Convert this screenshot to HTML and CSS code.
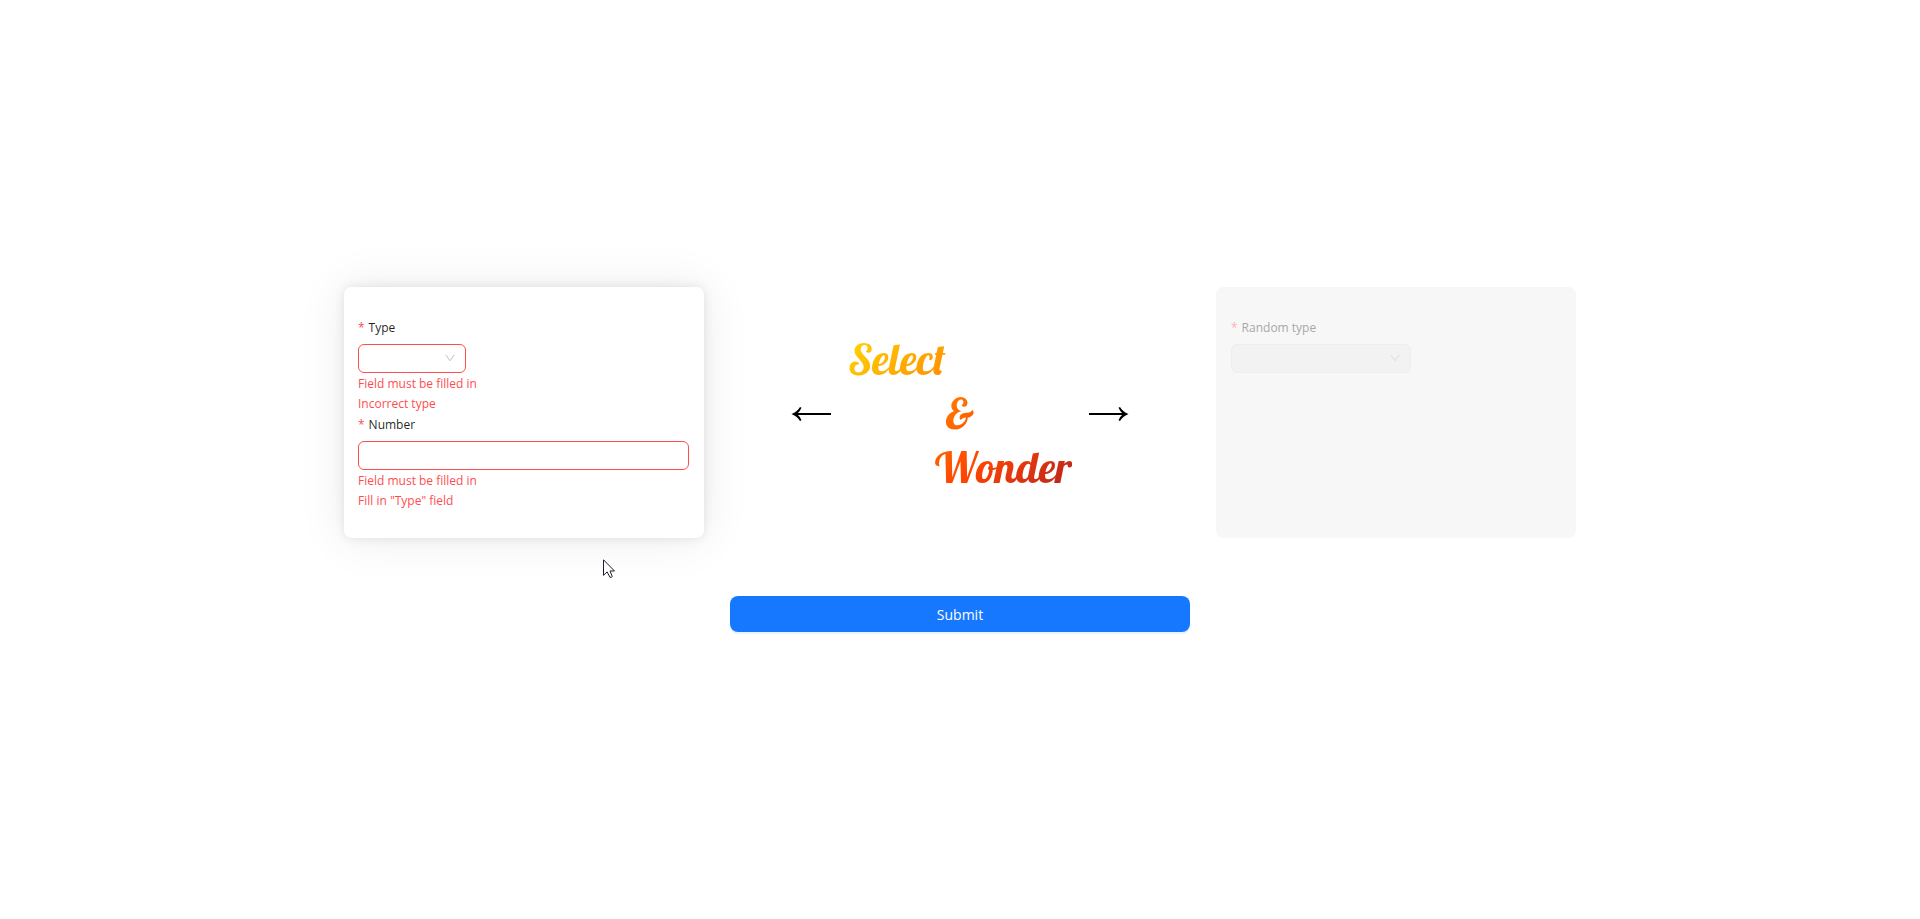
FILE: index.html
```html
<!DOCTYPE html>
<html lang="en">
<head>
<meta charset="utf-8">
<meta name="viewport" content="width=device-width, initial-scale=1">
<title>Select &amp; Wonder</title>
<link rel="stylesheet" href="styles.css">
</head>
<body>
<form class="page">
  <div class="board">
    <section class="card card-active">
      <div class="field">
        <label class="label" for="type"><span class="star">*</span>Type</label>
        <div class="select-wrap select-short">
          <select class="control invalid" id="type"><option></option></select>
          <svg class="chevron" viewBox="0 0 10 8" aria-hidden="true"><path d="M0.8 0.8 L5 6.8 L9.2 0.8"/></svg>
        </div>
        <p class="error">Field must be filled in</p>
        <p class="error">Incorrect type</p>
      </div>
      <div class="field">
        <label class="label" for="number"><span class="star">*</span>Number</label>
        <input class="control invalid" id="number" type="text">
        <p class="error">Field must be filled in</p>
        <p class="error">Fill in "Type" field</p>
      </div>
      <svg class="pointer" viewBox="0 0 12 19" aria-hidden="true"><path d="M0.5 0.8 V16.3 L4.1 12.9 L6.9 18.2 Q8.2 18.9 9.3 17.6 L7 12 H11.5 Z"/></svg>
    </section>
    <div class="hero">
      <svg class="arrow" viewBox="0 0 41 16" aria-hidden="true"><path class="shaft" d="M3 9 H40"/><path d="M0.500 9 Q6.500 6.500 9 2 L10.500 2.800 Q9 6.500 6 9 Q9 11.500 10.500 15.200 L9 16 Q6.500 11.500 0.500 9 Z"/></svg>
      <h1 class="title">
        <span class="word">Select</span>
        <span class="word word-middle">&amp;</span>
        <span class="word word-end">Wonder</span>
      </h1>
      <svg class="arrow" viewBox="0 0 41 16" aria-hidden="true"><path class="shaft" d="M1 9 H38"/><path d="M40.500 9 Q34.500 6.500 32 2 L30.500 2.800 Q32 6.500 35 9 Q32 11.500 30.500 15.200 L32 16 Q34.500 11.500 40.500 9 Z"/></svg>
    </div>
    <section class="card card-disabled">
      <div class="field">
        <label class="label" for="random"><span class="star">*</span>Random type</label>
        <div class="select-wrap select-long">
          <select class="control" id="random" disabled><option></option></select>
          <svg class="chevron" viewBox="0 0 10 8" aria-hidden="true"><path d="M0.8 0.8 L5 6.8 L9.2 0.8"/></svg>
        </div>
      </div>
    </section>
  </div>
  <button class="submit" type="button">Submit</button>
</form>
</body>
</html>
```
FILE: styles.css
```css
* {
  box-sizing: border-box;
}

body {
  margin: 0;
  background: #fff;
  color: rgba(0, 0, 0, 0.88);
  font-family: "Open Sans", "Noto Sans", sans-serif;
  font-size: 12px;
  line-height: 20px;
}

.page {
  display: flex;
  flex-direction: column;
  align-items: center;
  justify-content: center;
  gap: 58px;
  min-height: 100vh;
}

.board {
  display: grid;
  grid-template-columns: 360px 512px 360px;
}

.card {
  position: relative;
  padding: 30px 15px 27px 14px;
  border-radius: 8px;
}

.card-active {
  background: #fff;
  box-shadow: 0 0 12px rgba(0, 0, 0, 0.1), 0 0 50px rgba(0, 0, 0, 0.08);
}

.card-disabled {
  background: #f7f7f7;
  padding-left: 15px;
}

.label {
  display: block;
  padding-bottom: 5px;
  line-height: 22px;
}

.star {
  margin-right: 4px;
  color: #ff4d4f;
}

.card-disabled .label {
  color: #a8a8a8;
}

.card-disabled .star {
  color: #ffb0b0;
}

.select-wrap {
  position: relative;
}

.select-short {
  width: 108px;
}

.select-long {
  width: 180px;
}

.control {
  display: block;
  width: 100%;
  height: 29px;
  margin: 0 0 1px;
  padding: 0 11px;
  border: 1px solid #d9d9d9;
  border-radius: 6px;
  outline: none;
  background: #fff;
  font: inherit;
  appearance: none;
}

.control.invalid {
  border-color: #ff4d4f;
}

.control:disabled {
  border-color: #ededed;
  background: #f2f2f2;
  opacity: 1;
}

.chevron {
  position: absolute;
  top: 10px;
  right: 11px;
  width: 10px;
  height: 8px;
  fill: none;
  stroke: #bfbfbf;
  pointer-events: none;
}

.card-disabled .chevron {
  stroke: #dcdcdc;
}

.error {
  margin: 0;
  color: #ff4d4f;
}

.hero {
  display: flex;
  align-items: center;
  justify-content: center;
  gap: 16px;
}

.arrow {
  width: 41px;
  height: 16px;
}

.shaft {
  stroke: #000;
  stroke-width: 2;
}

.title {
  display: flex;
  flex-direction: column;
  width: 224px;
  margin: 0;
  background: linear-gradient(135deg, #ffd800 0%, #ff9800 32%, #ff6a00 50%, #ff4400 68%, #b22222 100%);
  background-clip: text;
  color: transparent;
  font-family: Lobster, "Liberation Serif", serif;
  font-size: 43px;
  font-weight: 400;
  line-height: 54px;
}

.word-middle {
  align-self: center;
}

.word-end {
  align-self: flex-end;
}

.submit {
  width: 460px;
  height: 36px;
  border: 0;
  border-radius: 8px;
  background: #1677ff;
  box-shadow: 0 2px 0 rgba(5, 145, 255, 0.1);
  color: #fff;
  font-family: inherit;
  font-size: 14px;
}

.pointer {
  position: absolute;
  top: 272px;
  left: 259px;
  width: 12px;
  height: 19px;
  fill: #fff;
  stroke: #1c1c28;
}
```
